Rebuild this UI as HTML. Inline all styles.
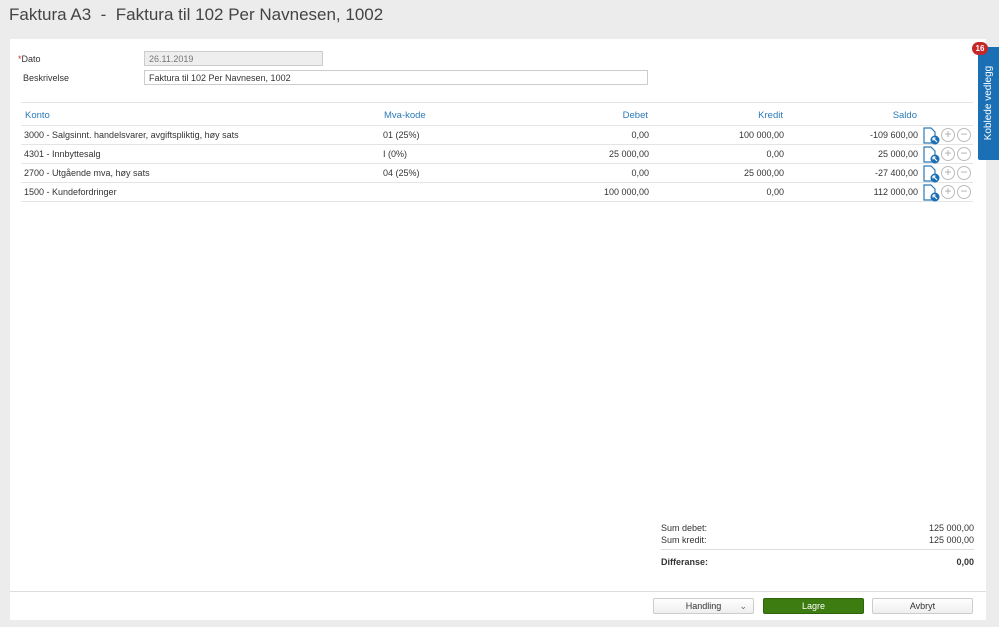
<!DOCTYPE html>
<html><head><style>
*{box-sizing:border-box;margin:0;padding:0}
body{width:999px;height:627px;background:#ececec;font-family:"Liberation Sans",sans-serif;font-size:9px;color:#333;position:relative;overflow:hidden}
.abs{position:absolute}
h1{position:absolute;left:9px;top:5px;font-size:17px;font-weight:normal;color:#444}
.panel{position:absolute;left:10px;top:39px;width:976px;height:581px;background:#fff}
.inp{position:absolute;height:15px;border:1px solid #ccc;padding:2px 4px;font-size:9px}
.r{text-align:right}
.hdr{color:#2a7ab8;font-size:9.5px}
.line{position:absolute;left:21px;width:952px;height:1px;background:#e4e4e4}
.ic{position:absolute;width:14px;height:14px;border:1px solid #bbb;border-radius:50%;color:#aaa;font-size:12px;line-height:11px;text-align:center}
.btn{position:absolute;top:598px;height:16px;border:1px solid #ccc;border-radius:2px;background:linear-gradient(#fff,#eee);text-align:center;line-height:14px;font-size:9px}
</style></head><body>
<h1>Faktura A3&nbsp; - &nbsp;Faktura til 102 Per Navnesen, 1002</h1>
<div class="panel"></div>
<div class="abs" style="left:18px;top:54px"><span style="color:#c33">*</span>Dato</div>
<div class="abs" style="left:23px;top:73px">Beskrivelse</div>
<div class="inp" style="left:144px;top:51px;width:179px;background:#eee;color:#777">26.11.2019</div>
<div class="inp" style="left:144px;top:70px;width:504px">Faktura til 102 Per Navnesen, 1002</div>
<div class="line" style="top:102px"></div>
<div class="abs hdr" style="left:25px;top:110px">Konto</div>
<div class="abs hdr" style="left:384px;top:110px">Mva-kode</div>
<div class="abs hdr r" style="left:548px;width:100px;top:110px">Debet</div>
<div class="abs hdr r" style="left:683px;width:100px;top:110px">Kredit</div>
<div class="abs hdr r" style="left:817px;width:100px;top:110px">Saldo</div>
<div class="line" style="top:125px"></div>
<div class="line" style="top:144px"></div>
<div class="line" style="top:163px"></div>
<div class="line" style="top:182px"></div>
<div class="line" style="top:201px"></div>

<div class="abs" style="left:24px;top:130px">3000 - Salgsinnt. handelsvarer, avgiftspliktig, høy sats</div>
<div class="abs" style="left:383px;top:130px">01 (25%)</div>
<div class="abs r" style="left:549px;width:100px;top:130px">0,00</div>
<div class="abs r" style="left:684px;width:100px;top:130px">100 000,00</div>
<div class="abs r" style="left:818px;width:100px;top:130px">-109 600,00</div>

<div class="abs" style="left:24px;top:149px">4301 - Innbyttesalg</div>
<div class="abs" style="left:383px;top:149px">I (0%)</div>
<div class="abs r" style="left:549px;width:100px;top:149px">25 000,00</div>
<div class="abs r" style="left:684px;width:100px;top:149px">0,00</div>
<div class="abs r" style="left:818px;width:100px;top:149px">25 000,00</div>

<div class="abs" style="left:24px;top:168px">2700 - Utgående mva, høy sats</div>
<div class="abs" style="left:383px;top:168px">04 (25%)</div>
<div class="abs r" style="left:549px;width:100px;top:168px">0,00</div>
<div class="abs r" style="left:684px;width:100px;top:168px">25 000,00</div>
<div class="abs r" style="left:818px;width:100px;top:168px">-27 400,00</div>

<div class="abs" style="left:24px;top:187px">1500 - Kundefordringer</div>
<div class="abs r" style="left:549px;width:100px;top:187px">100 000,00</div>
<div class="abs r" style="left:684px;width:100px;top:187px">0,00</div>
<div class="abs r" style="left:818px;width:100px;top:187px">112 000,00</div>

<!-- icons -->
<svg class="abs" style="left:922px;top:127px" width="20" height="76">
<g id="d"><path d="M2 1h7l4 4v11H2z" fill="#fff" stroke="#2a7ab8" stroke-width="1.2"/><circle cx="13" cy="13" r="4.5" fill="#1a6fb5"/><path d="M11 11l4 4M11 11h2.5M11 11v2.5" stroke="#fff" stroke-width="1.2"/></g>
<use href="#d" y="19"/><use href="#d" y="38"/><use href="#d" y="57"/>
</svg>
<div class="ic" style="left:941px;top:128px">+</div><div class="ic" style="left:957px;top:128px">−</div>
<div class="ic" style="left:941px;top:147px">+</div><div class="ic" style="left:957px;top:147px">−</div>
<div class="ic" style="left:941px;top:166px">+</div><div class="ic" style="left:957px;top:166px">−</div>
<div class="ic" style="left:941px;top:185px">+</div><div class="ic" style="left:957px;top:185px">−</div>

<!-- side tab -->
<div class="abs" style="left:978px;top:47px;width:21px;height:113px;background:#1a6fb5;border-radius:2px 0 0 2px"></div>
<div class="abs" style="left:939px;top:97px;width:100px;height:12px;color:#fff;font-size:10px;text-align:center;transform:rotate(-90deg)">Koblede vedlegg</div>
<div class="abs" style="left:972px;top:42px;width:16px;height:13px;border-radius:7px;background:#c62828;color:#fff;font-size:8px;font-weight:bold;text-align:center;line-height:13px">16</div>

<!-- sums -->
<div class="abs" style="left:661px;top:523px">Sum debet:</div>
<div class="abs r" style="left:874px;width:100px;top:523px">125 000,00</div>
<div class="abs" style="left:661px;top:535px">Sum kredit:</div>
<div class="abs r" style="left:874px;width:100px;top:535px">125 000,00</div>
<div class="abs" style="left:661px;top:549px;width:313px;height:1px;background:#ddd"></div>
<div class="abs" style="left:661px;top:557px;font-weight:bold">Differanse:</div>
<div class="abs r" style="left:874px;width:100px;top:557px;font-weight:bold">0,00</div>

<div class="abs" style="left:10px;top:591px;width:976px;height:1px;background:#ddd"></div>
<div class="btn" style="left:653px;width:101px">Handling <span style="position:absolute;right:6px;color:#666">⌄</span></div>
<div class="btn" style="left:763px;width:101px;background:#3d7c10;border-color:#2f650a;color:#fff">Lagre</div>
<div class="btn" style="left:872px;width:101px">Avbryt</div>
</body></html>
